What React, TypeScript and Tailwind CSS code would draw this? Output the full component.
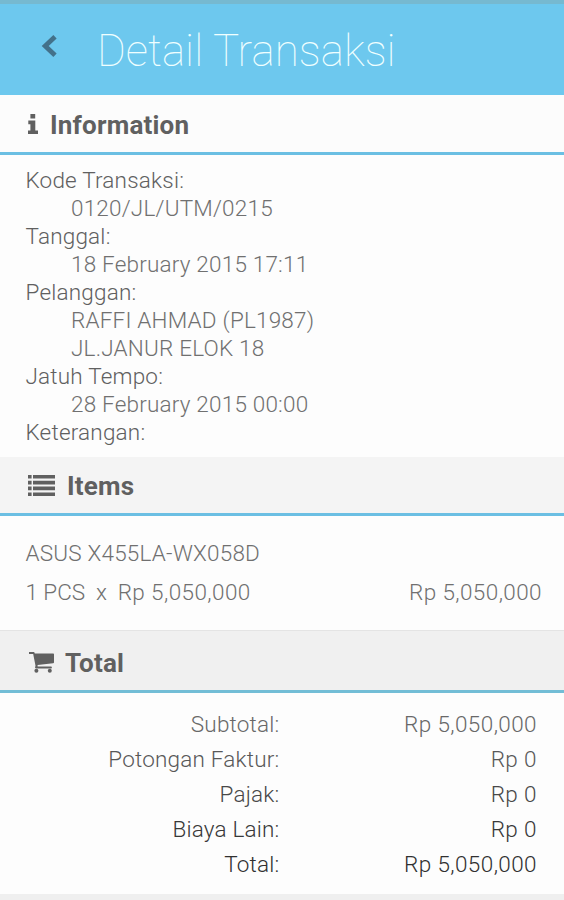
import React from 'react';

const information = [
  { label: 'Kode Transaksi:', lines: ['0120/JL/UTM/0215'] },
  { label: 'Tanggal:', lines: ['18 February 2015 17:11'] },
  { label: 'Pelanggan:', lines: ['RAFFI AHMAD (PL1987)', 'JL.JANUR ELOK 18'] },
  { label: 'Jatuh Tempo:', lines: ['28 February 2015 00:00'] },
  { label: 'Keterangan:', lines: [] },
];

const totals = [
  { label: 'Subtotal:', value: 'Rp 5,050,000', color: 'text-[#686868]' },
  { label: 'Potongan Faktur:', value: 'Rp 0', color: 'text-[#585858]' },
  { label: 'Pajak:', value: 'Rp 0', color: 'text-[#484848]' },
  { label: 'Biaya Lain:', value: 'Rp 0', color: 'text-[#383838]' },
  { label: 'Total:', value: 'Rp 5,050,000', color: 'text-[#303030]' },
];

const BackIcon = () => (
  <svg className="w-4 h-6 mb-[8px]" viewBox="0 0 16 24" fill="none" stroke="#43718a" strokeWidth="4.8">
    <path d="M14 2.8 L4.2 12 L14 21.2" />
  </svg>
);

const InfoIcon = () => (
  <svg className="w-[10px] h-[20px] mb-[2px]" viewBox="0 0 10 20" fill="currentColor">
    <path d="M2.4 0h4.8v4.4H2.4z M0.3 6.6h7v9.8H10V20H0v-3.6h2.4v-6.2H0.3z" />
  </svg>
);

const ListIcon = () => (
  <svg className="w-[27px] h-[21px]" viewBox="0 0 27 21" fill="currentColor">
    <path d="M0 0h3.6v3.6H0z M5 0h22v3.6H5z M0 5.8h3.6v3.6H0z M5 5.8h22v3.6H5z M0 11.6h3.6v3.6H0z M5 11.6h22v3.6H5z M0 17.4h3.6V21H0z M5 17.4h22V21H5z" />
  </svg>
);

const CartIcon = () => (
  <svg className="w-[25px] h-[21px]" viewBox="0 0 25 21" fill="currentColor">
    <path d="M0 0h4.6c.7 0 1 .5 1.2 1.6H24c.6 0 1 .4 1 1v7.6c0 .6-.3.9-.9 1L8.6 13v1.6H22c.6 0 .9.4.9.9s-.3.9-.9.9H7c-.7 0-1.1-.5-.9-1.1l.4-1.6L4.2 1.9H0z" />
    <circle cx="7.4" cy="18.7" r="2" />
    <circle cx="20.8" cy="18.7" r="2" />
  </svg>
);

export default function App() {
  return (
    <div className="w-[564px] h-[900px] overflow-hidden bg-[#fdfdfd] font-['Roboto',sans-serif] font-light text-[22.5px] tracking-[0.2px] text-[#606060]">
      <header className="flex items-center h-[95px] pl-[41px] bg-[#6dc8ee] border-t-4 border-[#76b9d0]">
        <BackIcon />
        <h1 className="ml-[40px] mt-[2px] text-[44px] leading-none font-thin tracking-normal text-[#f0ffff] whitespace-nowrap">
          Detail Transaksi
        </h1>
      </header>

      <section>
        <h2 className="flex items-center h-[60px] pt-[2px] pl-[28px] gap-[12px] border-b-[3px] border-[#6bbfe3] bg-[#fcfcfc] text-[26px] font-bold text-[#606060]">
          <InfoIcon />
          <span className="pt-[1px]">Information</span>
        </h2>
        <dl className="h-[302px] pt-[11px] pl-[25.5px] leading-[28px]">
          {information.map((row) => (
            <div key={row.label}>
              <dt>{row.label}</dt>
              {row.lines.map((line) => (
                <dd key={line} className="pl-[45.5px] text-[#707070]">{line}</dd>
              ))}
            </div>
          ))}
        </dl>
      </section>

      <section>
        <h2 className="flex items-center h-[59px] pl-[28px] gap-[12px] border-b-[3px] border-[#6bbfe3] bg-[#f4f4f4] text-[26px] font-bold text-[#606060]">
          <ListIcon />
          <span className="pt-[3px]">Items</span>
        </h2>
        <div className="h-[114px] pt-[18px] pl-[25.5px] pr-[22px] leading-[39px] text-[#707070]">
          <div>ASUS X455LA-WX058D</div>
          <div className="flex justify-between">
            <span className="whitespace-pre">
              <span className="tracking-[-0.05px]">1 PCS  x  </span>
              <span className="tracking-[0.4px]">Rp 5,050,000</span>
            </span>
            <span className="tracking-[0.4px]">Rp 5,050,000</span>
          </div>
        </div>
      </section>

      <section>
        <h2 className="flex items-center h-[63px] pt-[4px] pl-[29px] gap-[11px] border-t border-t-[#e4e4e4] border-b-[3px] border-b-[#72bdd6] bg-[#f0f0f0] text-[26px] font-bold text-[#606060]">
          <CartIcon />
          <span className="pt-[1px]">Total</span>
        </h2>
        <div className="h-[201px] pt-[14px] leading-[35px]">
          {totals.map((row) => (
            <div key={row.label} className={`flex ${row.color}`}>
              <span className="w-[279.5px] text-right">{row.label}</span>
              <span className="flex-1 pr-[27px] text-right tracking-[0.4px]">{row.value}</span>
            </div>
          ))}
        </div>
      </section>

      <div className="h-[6px] bg-[#efefef]" />
    </div>
  );
}
